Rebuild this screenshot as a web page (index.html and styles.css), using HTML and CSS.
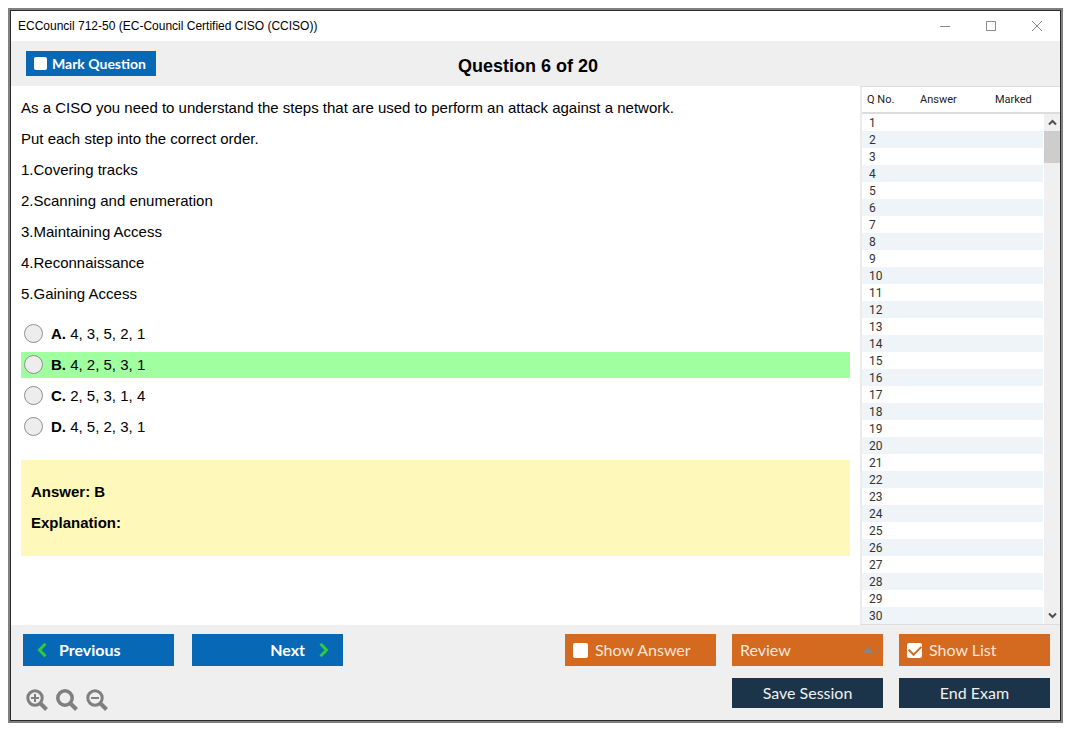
FILE: index.html
```html
<!DOCTYPE html>
<html lang="en">
<head>
<meta charset="utf-8">
<title>ECCouncil 712-50</title>
<link rel="stylesheet" href="styles.css">
</head>
<body>
<div class="window">
  <header class="titlebar">
    <span class="titlebar-text">ECCouncil 712-50 (EC-Council Certified CISO (CCISO))</span>
    <div class="window-controls">
      <button class="window-button" type="button" aria-label="Minimize"><svg width="12" height="12" viewBox="0 0 12 12"><path d="M1 6.500H11"/></svg></button>
      <button class="window-button" type="button" aria-label="Maximize"><svg width="12" height="12" viewBox="0 0 12 12"><path d="M1.500 1.500h9v9h-9z"/></svg></button>
      <button class="window-button" type="button" aria-label="Close"><svg width="12" height="12" viewBox="0 0 12 12"><path d="M1 1l10 10M11 1L1 11"/></svg></button>
    </div>
  </header>

  <div class="question-bar">
    <label class="mark"><input class="check check-small" type="checkbox">Mark Question</label>
    <h1 class="question-title">Question 6 of 20</h1>
  </div>

  <div class="content">
    <main class="question">
      <div class="prompt">
        <p>As a CISO you need to understand the steps that are used to perform an attack against a network.</p>
        <p>Put each step into the correct order.</p>
        <p>1.Covering tracks</p>
        <p>2.Scanning and enumeration</p>
        <p>3.Maintaining Access</p>
        <p>4.Reconnaissance</p>
        <p>5.Gaining Access</p>
      </div>
      <div class="options">
        <label class="option"><input class="radio" type="radio" name="choice"><span><b>A.</b> 4, 3, 5, 2, 1</span></label>
        <label class="option option-correct"><input class="radio" type="radio" name="choice"><span><b>B.</b> 4, 2, 5, 3, 1</span></label>
        <label class="option"><input class="radio" type="radio" name="choice"><span><b>C.</b> 2, 5, 3, 1, 4</span></label>
        <label class="option"><input class="radio" type="radio" name="choice"><span><b>D.</b> 4, 5, 2, 3, 1</span></label>
      </div>
      <section class="answer">
        <p>Answer: B</p>
        <p>Explanation:</p>
      </section>
    </main>

    <aside class="list">
      <table class="list-table">
        <thead><tr><th class="col-number">Q No.</th><th class="col-answer">Answer</th><th>Marked</th></tr></thead>
        <tbody>
          <tr><td>1</td><td></td><td></td></tr>
          <tr><td>2</td><td></td><td></td></tr>
          <tr><td>3</td><td></td><td></td></tr>
          <tr><td>4</td><td></td><td></td></tr>
          <tr><td>5</td><td></td><td></td></tr>
          <tr><td>6</td><td></td><td></td></tr>
          <tr><td>7</td><td></td><td></td></tr>
          <tr><td>8</td><td></td><td></td></tr>
          <tr><td>9</td><td></td><td></td></tr>
          <tr><td>10</td><td></td><td></td></tr>
          <tr><td>11</td><td></td><td></td></tr>
          <tr><td>12</td><td></td><td></td></tr>
          <tr><td>13</td><td></td><td></td></tr>
          <tr><td>14</td><td></td><td></td></tr>
          <tr><td>15</td><td></td><td></td></tr>
          <tr><td>16</td><td></td><td></td></tr>
          <tr><td>17</td><td></td><td></td></tr>
          <tr><td>18</td><td></td><td></td></tr>
          <tr><td>19</td><td></td><td></td></tr>
          <tr><td>20</td><td></td><td></td></tr>
          <tr><td>21</td><td></td><td></td></tr>
          <tr><td>22</td><td></td><td></td></tr>
          <tr><td>23</td><td></td><td></td></tr>
          <tr><td>24</td><td></td><td></td></tr>
          <tr><td>25</td><td></td><td></td></tr>
          <tr><td>26</td><td></td><td></td></tr>
          <tr><td>27</td><td></td><td></td></tr>
          <tr><td>28</td><td></td><td></td></tr>
          <tr><td>29</td><td></td><td></td></tr>
          <tr><td>30</td><td></td><td></td></tr>
        </tbody>
      </table>
      <div class="scroll">
        <div class="scroll-head"></div>
        <div class="scroll-track">
          <button class="scroll-button" type="button" aria-label="Scroll up"><svg width="9" height="7" viewBox="0 0 9 7"><path d="M1 5.500L4.500 2L8 5.500"/></svg></button>
          <div class="scroll-thumb"></div>
          <button class="scroll-button scroll-down" type="button" aria-label="Scroll down"><svg width="9" height="7" viewBox="0 0 9 7"><path d="M1 1.500L4.500 5L8 1.500"/></svg></button>
        </div>
      </div>
    </aside>
  </div>

  <footer class="footer">
    <div class="footer-left">
      <div class="nav">
        <button class="button button-blue" type="button"><svg width="12" height="16" viewBox="0 0 12 16"><path d="M9.500 1.800L3.500 8l6 6.200"/></svg>Previous</button>
        <button class="button button-blue button-next" type="button">Next<svg width="12" height="16" viewBox="0 0 12 16"><path d="M2.500 1.800L8.500 8l-6 6.200"/></svg></button>
      </div>
      <div class="zoom">
        <button class="zoom-button" type="button" aria-label="Zoom in"><svg width="22" height="22" viewBox="0 0 22 22"><circle cx="9" cy="9" r="7.200"/><path class="handle" d="M14 14l6.500 6.500"/><path class="sign" d="M5 9h8M9 5v8"/></svg></button>
        <button class="zoom-button" type="button" aria-label="Reset zoom"><svg width="22" height="22" viewBox="0 0 22 22"><circle class="bold" cx="9" cy="9" r="7.200"/><path class="handle" d="M14 14l6.500 6.500"/></svg></button>
        <button class="zoom-button" type="button" aria-label="Zoom out"><svg width="22" height="22" viewBox="0 0 22 22"><circle cx="9" cy="9" r="7.200"/><path class="handle" d="M14 14l6.500 6.500"/><path class="sign" d="M5 9h8"/></svg></button>
      </div>
    </div>
    <div class="actions">
      <label class="button button-orange"><input class="check" type="checkbox">Show Answer</label>
      <div class="review">
        <select class="button button-orange review-select" aria-label="Review"><option>Review</option></select>
        <svg class="review-arrow" width="10" height="6" viewBox="0 0 10 6"><path d="M0 6L5 0l5 6z"/></svg>
      </div>
      <label class="button button-orange"><input class="check" type="checkbox" checked>Show List</label>
      <button class="button button-navy button-save" type="button">Save Session</button>
      <button class="button button-navy" type="button">End Exam</button>
    </div>
  </footer>
</div>
</body>
</html>
```
FILE: styles.css
```css
* {
  box-sizing: border-box;
}

body {
  margin: 0;
  padding: 8px 12px 12px 8px;
  background: #fff;
  color: #000;
  font-family: "Liberation Sans", Arial, sans-serif;
  font-size: 15px;
}

button,
select {
  margin: 0;
  border: 0;
  border-radius: 0;
  padding: 0;
  background: none;
}

p {
  margin: 0;
}

svg {
  display: block;
  flex: none;
  fill: none;
}

.window {
  display: flex;
  flex-direction: column;
  min-height: calc(100vh - 24px);
  margin: 2px;
  border: 1px solid #2b2b2b;
  outline: 2px solid #808080;
}

.titlebar {
  display: flex;
  align-items: center;
  justify-content: space-between;
  height: 30px;
  padding: 0 17px 0 7px;
  font-size: 12px;
}

.window-controls {
  display: flex;
  gap: 34px;
}

.window-button svg {
  stroke: #8a8a8a;
}

.question-bar {
  display: grid;
  grid-template-columns: 1fr auto 1fr;
  align-items: center;
  height: 45px;
  padding: 0 30px 0 15px;
  background: #efefef;
}

.mark {
  display: flex;
  align-items: center;
  justify-self: start;
  gap: 5px;
  width: 130px;
  height: 25px;
  padding-left: 8px;
  background: #0768b5;
  color: #fff;
  font: bold 14px/20px Lato, sans-serif;
  white-space: nowrap;
}

.question-title {
  margin: 4px 0 0;
  font-size: 18px;
  line-height: 22px;
}

.check {
  appearance: none;
  display: grid;
  place-items: center;
  flex: none;
  width: 15px;
  height: 15px;
  margin: 0;
  border-radius: 2px;
  background: #fff;
}

.check-small {
  width: 13px;
  height: 13px;
}

.check:checked::before {
  content: "";
  width: 10px;
  height: 6px;
  margin-bottom: 3px;
  border: solid #d36a20;
  border-width: 0 0 2px 2px;
  transform: rotate(-45deg);
}

.content {
  display: flex;
  flex: 1;
}

.question {
  flex: 1;
  padding: 13px 10px;
}

.prompt {
  display: grid;
  gap: 14px;
  line-height: 17px;
}

.options {
  display: grid;
  gap: 5px;
  margin-top: 19px;
}

.option {
  display: flex;
  align-items: center;
  gap: 8px;
  height: 26px;
  padding: 0 0 2px 3px;
}

.option-correct {
  background: #a0ff9f;
}

.radio {
  appearance: none;
  width: 19px;
  height: 19px;
  margin: 0;
  border: 1px solid #8f8f8f;
  border-radius: 50%;
  background: #ededed;
}

.radio:checked {
  background: radial-gradient(#444 0 4px, #ededed 5px);
}

.answer {
  display: grid;
  gap: 14px;
  margin-top: 20px;
  padding: 23px 10px 25px;
  background: #fef8ba;
  font-weight: bold;
  line-height: 17px;
}

.list {
  display: flex;
  width: 200px;
  border: solid #dcdcdc;
  border-width: 1px 0 1px 2px;
  border-left-color: #ebebeb;
}

.list-table {
  flex: 1;
  align-self: flex-start;
  border-spacing: 0;
  table-layout: fixed;
  color: #333;
  font: 12px/15px Roboto, sans-serif;
}

.list-table th {
  height: 27px;
  padding: 0 0 1px;
  border-bottom: 2px solid #dcdcdc;
  color: #222;
  font-size: 11px;
  font-weight: normal;
  text-align: left;
}

.list-table .col-number {
  width: 58px;
  padding-left: 5px;
}

.list-table .col-answer {
  width: 75px;
}

.list-table td {
  height: 17px;
  padding: 2px 0 0 7px;
}

.list-table tbody tr:nth-child(even) {
  background: #eff4f9;
}

.scroll {
  display: flex;
  flex-direction: column;
  width: 17px;
}

.scroll-head {
  height: 27px;
  border-bottom: 2px solid #dcdcdc;
}

.scroll-track {
  display: flex;
  flex: 1;
  flex-direction: column;
  margin-left: 1px;
  background: #f0f0f0;
}

.scroll-button {
  display: grid;
  place-items: center;
  height: 17px;
}

.scroll-button svg {
  stroke: #505050;
  stroke-width: 2;
}

.scroll-down {
  margin-top: auto;
}

.scroll-thumb {
  height: 32px;
  background: #cdcdcd;
}

.footer {
  display: flex;
  justify-content: space-between;
  padding: 9px 10px 9px 12px;
  background: #efefef;
}

.nav {
  display: flex;
  gap: 18px;
}

.button {
  display: flex;
  align-items: center;
  gap: 7px;
  width: 151px;
  height: 32px;
  padding: 0 8px;
  font: 16px/20px Lato, sans-serif;
  white-space: nowrap;
}

.button-blue {
  gap: 11px;
  padding: 0 13px;
  background: #0768b5;
  color: #fff;
  font-weight: bold;
}

.button-blue svg {
  stroke: #2fcc3a;
  stroke-width: 3;
}

.button-next {
  justify-content: flex-end;
  gap: 13px;
}

.button-orange {
  background: #d36a20;
  color: #fbe6d6;
}

.button-navy {
  justify-content: center;
  height: 30px;
  background: #1b344a;
  color: #f0f0f0;
}

.button-save {
  grid-column: 2;
}

.zoom {
  display: flex;
  gap: 8px;
  margin: 23px 0 0 3px;
}

.zoom-button svg {
  stroke: #7f7f7f;
  stroke-width: 3;
}

.zoom-button .handle {
  stroke-width: 4;
}

.zoom-button .sign {
  stroke-width: 2;
}

.zoom-button .bold {
  stroke-width: 3.500;
}

.actions {
  display: grid;
  grid-template-columns: repeat(3, 151px);
  align-content: start;
  gap: 12px 16px;
}

.review {
  display: grid;
  align-items: center;
}

.review > * {
  grid-area: 1 / 1;
}

.review-select {
  appearance: none;
}

.review-arrow {
  justify-self: end;
  margin-right: 10px;
  fill: #8a8580;
  pointer-events: none;
}
```
